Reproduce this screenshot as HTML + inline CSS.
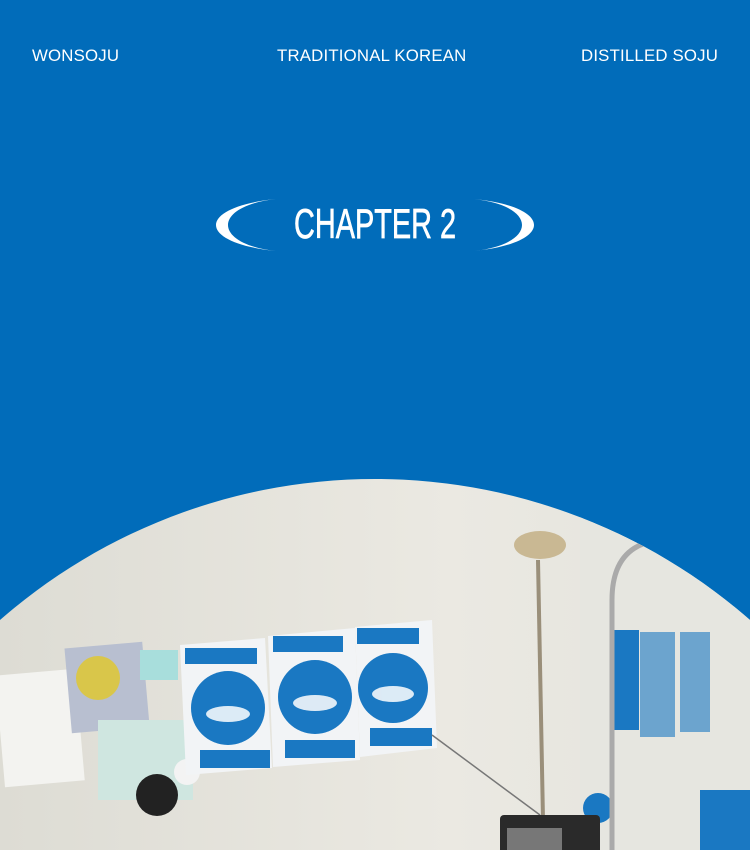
<!DOCTYPE html>
<html><head><meta charset="utf-8"><style>
html,body{margin:0;padding:0}
body{width:750px;height:850px;background:#016cba;position:relative;overflow:hidden;font-family:"Liberation Sans",sans-serif;color:#fff}
.t{position:absolute;top:46px;font-size:16.8px;letter-spacing:0.2px;white-space:nowrap}
</style></head><body>
<div class="t" style="left:32px">WONSOJU</div>
<div class="t" style="left:277px">TRADITIONAL KOREAN</div>
<div class="t" style="left:581px">DISTILLED SOJU</div>
<svg width="750" height="850" style="position:absolute;left:0;top:0">
<path d="M276,199 C196,207 196,243 276,251 C212,244 212,206 276,199Z" fill="#fff"/>
<path d="M474,199 C554,207 554,243 474,251 C538,244 538,206 474,199Z" fill="#fff"/>
<text x="375" y="238" text-anchor="middle" font-family="Liberation Sans Narrow, Liberation Sans, sans-serif" font-size="42" fill="#fff" stroke="#fff" stroke-width="0.7" textLength="162" lengthAdjust="spacingAndGlyphs">CHAPTER 2</text>
<defs><clipPath id="c"><circle cx="375" cy="1048" r="569"/></clipPath>
<linearGradient id="w" x1="0" x2="1"><stop offset="0" stop-color="#dddcd4"/><stop offset="0.6" stop-color="#ebe9e2"/><stop offset="1" stop-color="#e3e3dd"/></linearGradient></defs>
<g clip-path="url(#c)">
<rect x="0" y="470" width="750" height="380" fill="url(#w)"/>
<rect x="580" y="470" width="170" height="380" fill="#e6e6e0"/>
<rect x="0" y="672" width="80" height="112" fill="#f3f3f0" transform="rotate(-5 40 728)"/>
<rect x="68" y="645" width="78" height="85" fill="#b8bfd0" transform="rotate(-5 107 687)"/>
<circle cx="98" cy="678" r="22" fill="#d9c64a"/>
<rect x="98" y="720" width="95" height="80" fill="#cfe6e0"/>
<rect x="140" y="650" width="38" height="30" fill="#a8dedc"/>
<circle cx="157" cy="795" r="21" fill="#222"/>
<circle cx="187" cy="772" r="13" fill="#f3f3f3"/>
<g fill="#f2f4f6">
<polygon points="180,645 265,638 272,768 186,775"/>
<polygon points="268,636 355,628 360,760 273,767"/>
<polygon points="355,627 432,620 437,748 360,757"/>
</g>
<g fill="#1a78c2">
<circle cx="228" cy="708" r="37"/><circle cx="315" cy="697" r="37"/><circle cx="393" cy="688" r="35"/>
<rect x="185" y="648" width="72" height="16"/><rect x="273" y="636" width="70" height="16"/><rect x="357" y="628" width="62" height="16"/>
<rect x="200" y="750" width="70" height="18"/><rect x="285" y="740" width="70" height="18"/><rect x="370" y="728" width="62" height="18"/>
<rect x="614" y="630" width="25" height="100"/><rect x="640" y="632" width="35" height="105" opacity="0.6"/><rect x="680" y="632" width="30" height="100" opacity="0.6"/>
<rect x="700" y="790" width="50" height="60"/>
<circle cx="598" cy="808" r="15"/>
</g>
<g fill="#fff" opacity="0.85">
<ellipse cx="228" cy="714" rx="22" ry="8"/><ellipse cx="315" cy="703" rx="22" ry="8"/><ellipse cx="393" cy="694" rx="21" ry="8"/>
</g>
<line x1="432" y1="735" x2="540" y2="815" stroke="#777" stroke-width="1.5"/>
<line x1="538" y1="560" x2="543" y2="820" stroke="#9a8f7a" stroke-width="4"/>
<ellipse cx="540" cy="545" rx="26" ry="14" fill="#c9b893"/>
<path d="M612,850 L612,600 Q612,545 660,540" stroke="#aaa" stroke-width="5" fill="none"/>
<rect x="500" y="815" width="100" height="40" rx="4" fill="#2a2a2a"/>
<rect x="507" y="828" width="55" height="25" fill="#777"/>
</g>
</svg>
</body></html>
